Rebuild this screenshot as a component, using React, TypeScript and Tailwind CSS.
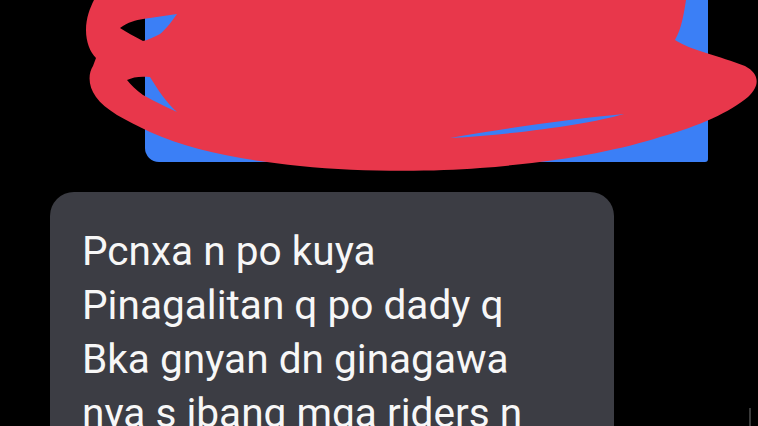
import React from 'react';

const lines = [
  'Pcnxa n po kuya',
  'Pinagalitan q po dady q',
  'Bka gnyan dn ginagawa',
  'nya s ibang mga riders n',
];

// Red scribble drawn over the outgoing message
const Scribble: React.FC = () => (
  <svg className="absolute left-0 top-0" width="758" height="180" viewBox="0 0 758 180">
    <path
      fill="#e8374b"
      fillRule="evenodd"
      d="M94 0 L686 0 C684 12 682 28 675 40 C690 50 720 56 745 66 C760 74 760 86 748 97 C730 112 700 126 660 137 C620 150 560 162 480 168 C430 172 360 172 300 166 C240 160 190 150 150 132 C125 120 105 110 96 97 C88 86 88 74 93 66 L96 58 C90 52 86 42 86 30 C86 18 90 8 94 0 Z
         M120 28 C128 22 136 20 143 19 L177 14 C170 24 165 30 160 34 C154 37 148 40 143 41 C134 36 126 32 120 28 Z
         M127 80 C133 77 140 76 150 77 C158 90 166 102 177 112 C168 108 154 101 143 95 C136 90 131 85 127 80 Z
         M450 138 C520 126 580 118 624 114 C590 124 520 134 450 138 Z"
    />
  </svg>
);

export default function App() {
  return (
    <div className="relative h-[426px] w-[758px] overflow-hidden bg-black" style={{ fontFamily: 'Roboto, "Noto Sans", sans-serif' }}>
      <div className="flex flex-col">
        {/* Outgoing bubble */}
        <div className="ml-[145px] h-[162px] w-[563px] rounded-bl-[14px] rounded-br-[3px] bg-[#3b7ff6]" />

        {/* Incoming bubble */}
        <div className="ml-[50px] mt-[30px] w-[564px] rounded-[24px] bg-[#3c3d44] pb-8 pl-[32px] pt-[32px]">
          {lines.map((line) => (
            <p key={line} className="text-[40.6px] leading-[54px] text-[#f7f7f7]">
              {line}
            </p>
          ))}
        </div>
      </div>

      <Scribble />

      {/* Scroll indicator */}
      <div className="absolute bottom-0 left-[749px] h-[18px] w-[2px] bg-[#3a3a3a]" />
    </div>
  );
}
